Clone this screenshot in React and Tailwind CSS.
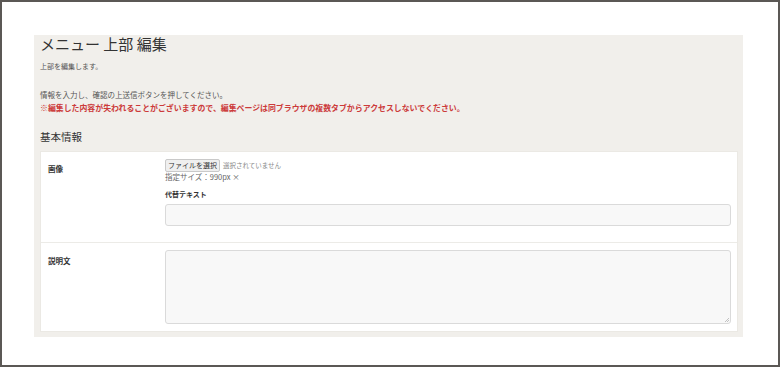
import React from 'react';

const FONT = { fontFamily: '"Noto Sans CJK JP", "Noto Sans", sans-serif' };

const FormRow = ({ label, labelTop, children, last }) => {
  return (
    <div className={`flex pt-[7px] ${last ? 'pb-[7px]' : 'pb-[16px] border-b border-[#ecebe7]'}`}>
      <div className="w-[124px] pl-[7px] shrink-0">
        <div className={`text-[7.5px] leading-[10px] font-bold text-[#333] ${labelTop}`}>{label}</div>
      </div>
      <div className="w-[566px]">{children}</div>
    </div>
  );
};

const App = () => {
  return (
    <div
      className="w-[780px] h-[367px] border-2 border-[#5b5855] bg-white pt-[31px] pl-[32px] overflow-hidden"
      style={FONT}
    >
      {/* Main panel */}
      <div className="w-[709px] h-[302px] bg-[#f1efeb] pl-[6px]">
        <h1 className="text-[15px] leading-[18px] mt-[2px] text-[#333] font-normal">
          メニュー 上部 編集
        </h1>
        <p className="text-[7px] leading-[12px] mt-[7px] text-[#555]">上部を編集します。</p>

        <div className="mt-[16px] leading-[13px]">
          <p className="text-[7.5px] text-[#555]">情報を入力し、確認の上送信ボタンを押してください。</p>
          <p className="text-[7.9px] font-bold text-[#cc3a3a]">
            ※編集した内容が失われることがございますので、編集ページは同ブラウザの複数タブからアクセスしないでください。
          </p>
        </div>

        <h2 className="text-[10.5px] leading-[14px] mt-[16px] text-[#333] font-normal">基本情報</h2>

        {/* Card */}
        <div className="w-[698px] mt-[7px] bg-white border border-[#ebe9e4]">
          <FormRow label="画像" labelTop="mt-[5px]">
            <div className="flex items-center gap-[3px] h-[13px]">
              <span className="h-[13px] px-[2px] flex items-center bg-[#efefef] border border-[#c9c9c9] rounded-[2px] text-[7px] text-[#333]">
                ファイルを選択
              </span>
              <span className="text-[6.5px] text-[#888]">選択されていません</span>
            </div>
            <div className="text-[7.5px] leading-[10px] text-[#666]">指定サイズ：990px ×</div>
            <div className="text-[7px] leading-[10px] mt-[7px] font-bold text-[#333]">代替テキスト</div>
            <div className="mt-[5px] h-[22px] bg-[#f8f8f8] border border-[#dadada] rounded-[3px]" />
          </FormRow>
          <FormRow label="説明文" labelTop="mt-[6px]" last>
            <div className="relative h-[74px] bg-[#f8f8f8] border border-[#dadada] rounded-[3px]">
              <svg className="absolute right-[1px] bottom-[1px]" width="5" height="5" viewBox="0 0 5 5">
                <path d="M5 1 L1 5 M5 3 L3 5" stroke="#aaa" strokeWidth="0.7" />
              </svg>
            </div>
          </FormRow>
        </div>
      </div>
    </div>
  );
};

export default App;
